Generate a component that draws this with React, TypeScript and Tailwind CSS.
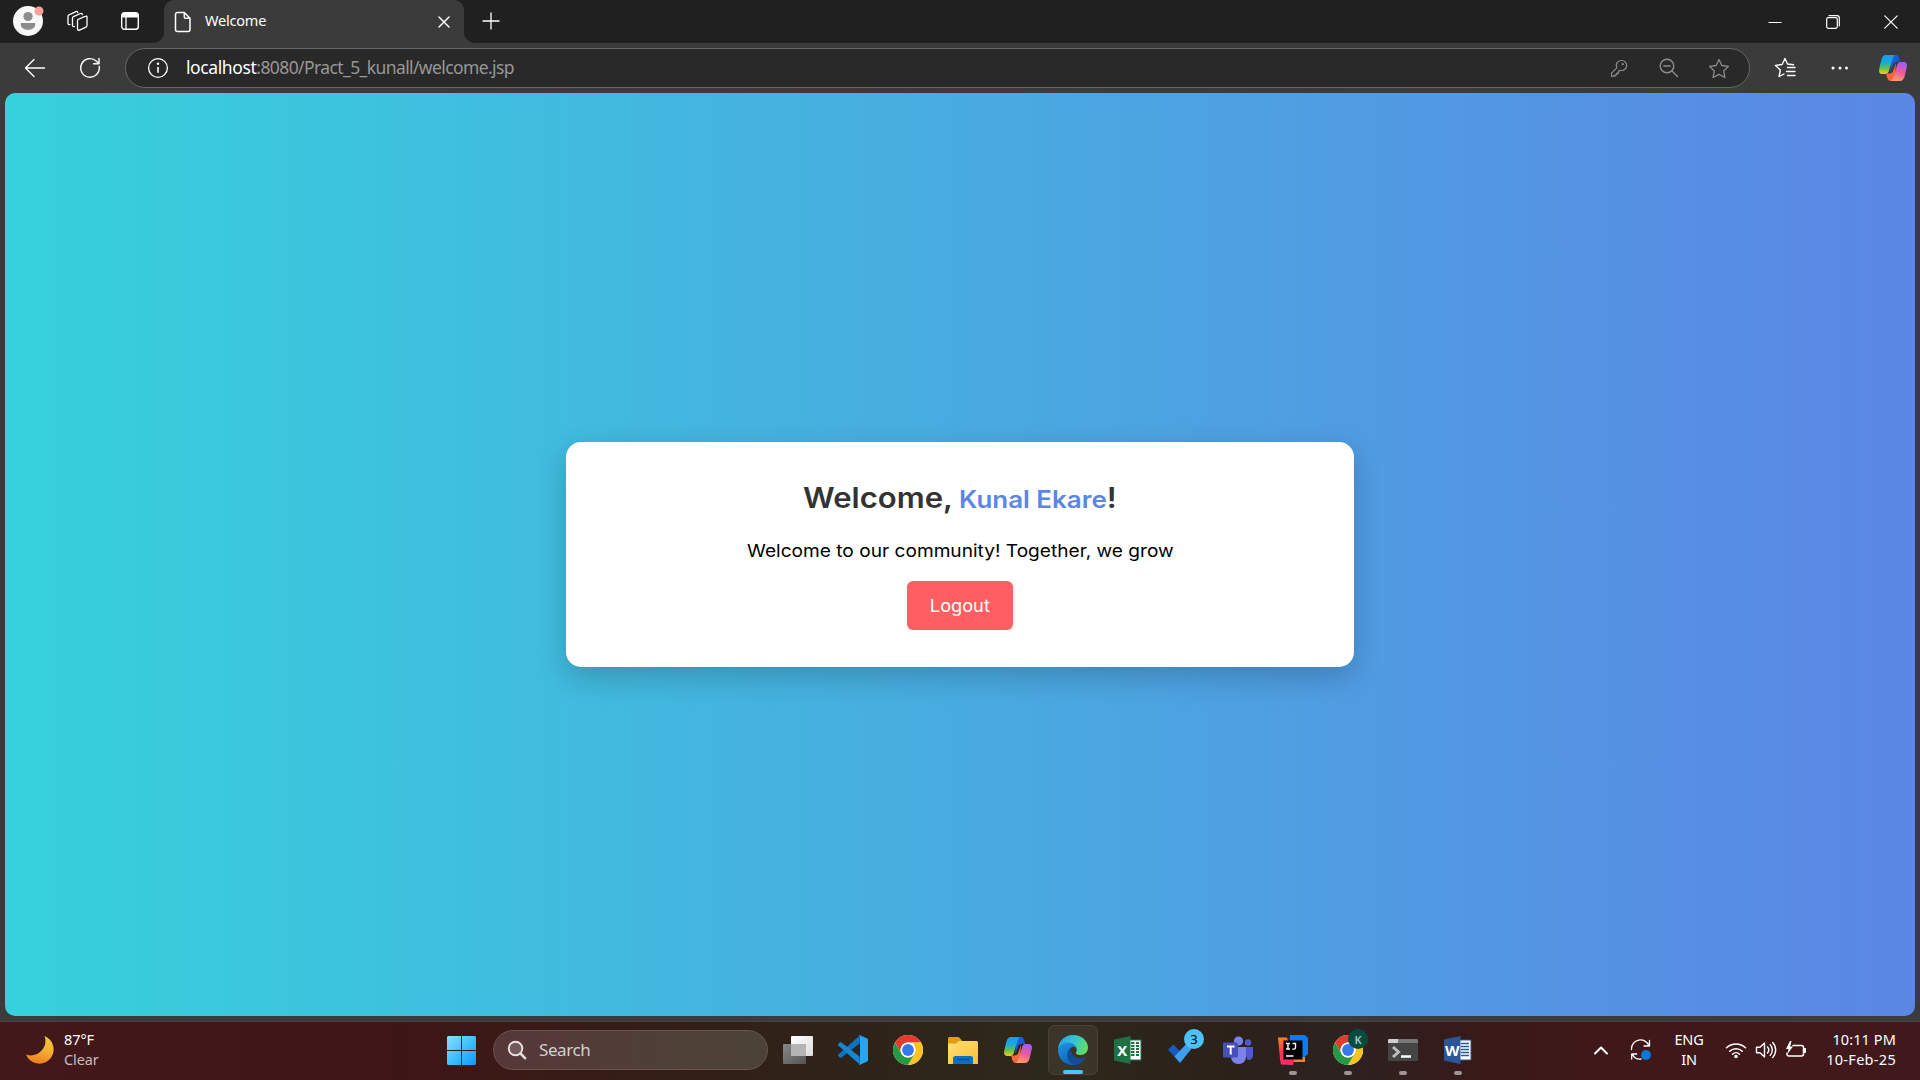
import React from "react";

const line = { fill: "none", stroke: "currentColor", strokeLinecap: "round", strokeLinejoin: "round" } as const;

function Icon({ w, h, box, className = "", children }: { w: number; h: number; box?: string; className?: string; children: React.ReactNode }) {
  return (
    <svg width={w} height={h} viewBox={box ?? `0 0 ${w} ${h}`} className={`block shrink-0 ${className}`} aria-hidden="true">
      {children}
    </svg>
  );
}

function Copilot({ id }: { id: string }) {
  return (
    <Icon w={30} h={28}>
      <defs>
        <linearGradient id={`${id}a`} x1="0" y1="0" x2="0" y2="1">
          <stop offset="0" stopColor="#1b9af0" />
          <stop offset=".4" stopColor="#19a9d8" />
          <stop offset=".7" stopColor="#63c14b" />
          <stop offset="1" stopColor="#f2cc1c" />
        </linearGradient>
        <linearGradient id={`${id}b`} x1=".6" y1="0" x2=".3" y2="1">
          <stop offset="0" stopColor="#a45cf2" />
          <stop offset=".5" stopColor="#ee5a9b" />
          <stop offset="1" stopColor="#ffa25e" />
        </linearGradient>
        <linearGradient id={`${id}c`} x1="0" y1="0" x2="1" y2="1">
          <stop offset="0" stopColor="#1a6fe8" />
          <stop offset="1" stopColor="#1740b8" />
        </linearGradient>
      </defs>
      <path d="M14 1h3.500c2.500 0 3.200 1.500 3.800 3.500l1 3.500h-4c-2 0-3 1-3.600 3L12 19z" fill={`url(#${id}c)`} />
      <path d="M16.500 27H13c-2.500 0-3.200-1.500-3.800-3.500L8 19.500h3.500c2.200 0 3.200-1 3.800-3L18 9z" fill="#f4683e" />
      <path d="M8 1h10c-1.700 0-2.600 1-3.200 3l-4 13c-.6 2-1.800 3-3.500 3H4.500C1.500 20 .5 18 1.300 14.500l2-8.500C4.200 2.500 5.500 1 8 1z" fill={`url(#${id}a)`} />
      <path d="M22 27H12c1.700 0 2.600-1 3.200-3l4-13c.6-2 1.800-3 3.500-3h2.800c3 0 4 2 3.200 5.500l-2 8.500C25.800 25.500 24.500 27 22 27z" fill={`url(#${id}b)`} />
    </Icon>
  );
}

function Chrome() {
  return (
    <>
      <circle cx="15" cy="15" r="15" fill="#fff" />
      <path d="M2 7.500A15 15 0 0 1 28 7.500H15a7.500 7.500 0 0 0-6.500 11.250z" fill="#e33b2e" />
      <path d="M28 7.500A15 15 0 0 1 15 30l6.500-11.250A7.500 7.500 0 0 0 21.500 11.250L20 7.500z" fill="#fcc31e" />
      <path d="M15 30A15 15 0 0 1 2 7.500l6.500 11.250a7.500 7.500 0 0 0 13 0z" fill="#269943" />
      <circle cx="15" cy="15" r="7.400" fill="#fff" />
      <circle cx="15" cy="15" r="5.900" fill="#3478ec" />
    </>
  );
}

function OfficeIcon({ letter, back, front }: { letter: string; back: string; front: string }) {
  return (
    <Icon w={28} h={28}>
      <path d="M14 4h13v20H14z" fill="#fff" stroke={front} strokeWidth="1" />
      {letter === "X" ? (
        <path d="M17 7h3.500M22 7h3M17 10h3.500M22 10h3M17 13h3.500M22 13h3M17 16h3.500M22 16h3M17 19h3.500M22 19h3" stroke={front} strokeWidth="2" />
      ) : (
        <path d="M17 7.500h8M17 10.500h8M17 13.500h8M17 16.500h8M17 19.500h8" stroke={front} strokeWidth="1.500" />
      )}
      <path d="M0 3.500 16.500 0v28L0 24.500z" fill={back} />
      <text x="8.200" y="19.500" textAnchor="middle" fontSize="15" fontWeight="700" fontFamily="Open Sans, sans-serif" fill="#fff">
        {letter}
      </text>
    </Icon>
  );
}

function TaskItem({ active, running, children }: { active?: boolean; running?: boolean; children: React.ReactNode }) {
  return (
    <div className="flex w-[55px] justify-center">
      <div
        className={
          active
            ? "relative flex h-[50px] w-[50px] items-center justify-center rounded-md border border-[#4a4134] bg-[#3b3429]"
            : "relative flex h-[50px] w-[50px] items-center justify-center"
        }
      >
        {children}
        {active && <span className="absolute bottom-0 h-1 w-5 rounded-full bg-[#4cc2ff]" />}
        {running && <span className="absolute bottom-0 h-1 w-2 rounded-full bg-[#9b9694]" />}
      </div>
    </div>
  );
}

function TabStrip() {
  return (
    <div className="flex h-[43px] bg-[#202020] text-white">
      <div className="flex w-[164px] items-start">
        <Icon w={34} h={36} className="ml-3 mt-1">
          <circle cx="16" cy="17" r="15" fill="#f7f7f7" />
          <circle cx="16" cy="12.500" r="4.600" fill="#8c8c8c" />
          <path d="M8.800 19h14.400v1.500c0 3.200-3 5.300-7.200 5.300s-7.200-2.100-7.200-5.300z" fill="#8c8c8c" />
          <circle cx="27" cy="7" r="4.500" fill="#fca198" />
        </Icon>
        <Icon w={24} h={24} className="ml-5 mt-[9px]">
          <g {...line} strokeWidth="1.300" transform="translate(-1.500 -1)">
            <path d="m13.500 11.500 7.500-3.300c.8-.4 1.500 0 1.500.9v8.400c0 .8-.3 1.300-1 1.600l-6.500 3c-1 .5-2 0-2-1v-8.200c0-.7 0-1 .5-1.400z" />
            <path d="M10 18.500c-1 .4-2 0-2-1v-7.300c0-.8.300-1.200 1-1.500l7-3.200c1-.4 1.600 0 1.800 1" />
            <path d="M5.500 16.500c-1 .4-2 0-2-1V8.300c0-.8.300-1.200 1-1.500l7-3.200c1-.4 1.600 0 1.800 1" />
          </g>
        </Icon>
        <Icon w={20} h={20} className="ml-[30px] mt-[11px]">
          <rect x="1.700" y="1.700" width="16.600" height="16.600" rx="2.800" {...line} strokeWidth="1.400" />
          <path d="M1.500 6.500V4A2.700 2.700 0 0 1 4 1.500h12A2.700 2.700 0 0 1 18.500 4v2.500z" fill="#fff" />
          <path d="M6 6v12" stroke="#fff" strokeWidth="1.300" />
        </Icon>
      </div>
      <div className="relative flex w-[300px] items-center rounded-t-[10px] bg-[#3b3b3b]">
        <span className="absolute -left-[10px] bottom-0 h-[10px] w-[10px] bg-[radial-gradient(circle_at_0_0,#202020_9.500px,#3b3b3b_10px)]" />
        <span className="absolute -right-[10px] bottom-0 h-[10px] w-[10px] bg-[radial-gradient(circle_at_100%_0,#202020_9.500px,#3b3b3b_10px)]" />
        <Icon w={18} h={22} className="ml-[10px]">
          <path d="M3.500 1.500h6.800L16 7.200v11.300a2 2 0 0 1-2 2H3.500a2 2 0 0 1-2-2v-15a2 2 0 0 1 2-2zM10.300 1.700V6a1.200 1.200 0 0 0 1.200 1.200H16" {...line} strokeWidth="1.500" />
        </Icon>
        <span className="-mt-0.5 ml-[13px] flex-1 text-[14.500px] tracking-[-0.2px]">Welcome</span>
        <Icon w={12} h={12} className="mr-[14px]">
          <path d="M1 1l10 10M11 1 1 11" {...line} strokeWidth="1.500" />
        </Icon>
      </div>
      <Icon w={18} h={18} className="ml-[17.500px] mt-3">
        <path d="M.5 9h17M9 .5v17" stroke="#fff" strokeWidth="1.300" />
      </Icon>
      <div className="ml-auto mr-[22px] flex items-center gap-[43px]">
        <Icon w={14} h={14}>
          <path d="M.5 7.500h13" stroke="#fff" />
        </Icon>
        <Icon w={14} h={14} className="ml-px">
          <rect x=".7" y="2.700" width="10.600" height="10.600" rx="1.500" {...line} strokeWidth="1.200" />
          <path d="M3 .7h8a2.300 2.300 0 0 1 2.300 2.300v8" {...line} strokeWidth="1.200" />
        </Icon>
        <Icon w={14} h={14} className="ml-px">
          <path d="M.8.8l12.400 12.400M13.200.8.8 13.200" {...line} strokeWidth="1.200" />
        </Icon>
      </div>
    </div>
  );
}

const star = "M11 1.500l2.900 6 6.600.9-4.800 4.600 1.200 6.500L11 16.400l-5.900 3.100 1.200-6.500L1.500 8.400l6.600-.9z";

function Toolbar() {
  return (
    <div className="flex h-[50px] items-center bg-[#3b3b3b] text-white">
      <Icon w={22} h={20} className="ml-6">
        <path d="M20.500 10H1.500M10 1.500 1.500 10l8.500 8.500" {...line} strokeWidth="1.400" />
      </Icon>
      <Icon w={22} h={22} className="ml-[33px]">
        <path d="M20.200 9.500A9.300 9.300 0 1 1 17.500 4.300L20 6.700M20 1.500v5.300h-5.400" {...line} strokeWidth="1.400" />
      </Icon>
      <div className="ml-6 flex h-10 w-[1625px] items-center rounded-full border border-[#666] bg-[#292929]">
        <Icon w={22} h={22} className="ml-[21px]">
          <circle cx="11" cy="11" r="9.400" {...line} strokeWidth="1.300" />
          <path d="M11 10v5.800" stroke="#fff" strokeWidth="1.600" />
          <circle cx="11" cy="6.800" r="1.200" fill="#fff" />
        </Icon>
        <div className="-mt-px ml-[17px] flex-1 whitespace-nowrap text-[17.500px] tracking-[-0.600px] text-[#979797]">
          <span className="tracking-[-0.400px] text-white">localhost</span>:8080/Pract_5_kunall/welcome.jsp
        </div>
        <div className="flex items-center text-[#8d8d8d]">
          <Icon w={18} h={18}>
            <path d="M11.300 1.500a5 5 0 1 1-1.300 9.700l-1.500 1.300v1.700H6.700v1.600H5v1.400H1.500v-3l5.300-5.300a5 5 0 0 1 4.500-7.400z" {...line} strokeWidth="1.200" />
            <circle cx="12.800" cy="5.200" r="1.100" fill="currentColor" />
          </Icon>
          <Icon w={20} h={20} className="ml-[31px]">
            <circle cx="8" cy="8" r="6.800" {...line} strokeWidth="1.400" />
            <path d="M4.800 8h6.400M13 13l5.500 5.500" {...line} strokeWidth="1.400" />
          </Icon>
          <Icon w={22} h={21} className="ml-[29px] mr-[19px]">
            <path d={star} {...line} strokeWidth="1.300" />
          </Icon>
        </div>
      </div>
      <Icon w={22} h={22} className="ml-[24px]">
        <path d="M19.500 7.800 13.500 7 11 1.500 8.100 7.500l-6.600.9 4.800 4.600-1.200 6.500L10 17M13.500 10.500h7.500M12.500 14.500H21M13.500 18.500H21" {...line} strokeWidth="1.400" />
      </Icon>
      <Icon w={18} h={4} className="ml-[35px]">
        <circle cx="2" cy="2" r="1.500" fill="#fff" />
        <circle cx="9" cy="2" r="1.500" fill="#fff" />
        <circle cx="15.500" cy="2" r="1.500" fill="#fff" />
      </Icon>
      <div className="ml-[29px]">
        <Copilot id="top" />
      </div>
    </div>
  );
}

function WelcomeCard() {
  return (
    <div className="flex h-[225px] w-[788px] flex-col items-center rounded-[15px] bg-white pt-[33px] font-['Inter',sans-serif] shadow-[0_10px_30px_rgba(0,0,0,0.2)]">
      <h1 className="scale-x-[1.09] whitespace-nowrap text-[28.500px] font-semibold leading-[46px] text-[#333]">
        Welcome, <span className="-ml-px text-[23.800px] text-[#5b86e5]">Kunal Ekare</span>!
      </h1>
      <p className="mt-[15px] scale-x-[1.092] whitespace-nowrap text-[17.500px] leading-[26px] text-black">Welcome to our community! Together, we grow</p>
      <button className="mt-[17px] h-[49px] w-[106px] rounded-md bg-[#ff5e62] pt-px text-[17.500px] text-white">
        <span className="inline-block scale-x-[1.04]">Logout</span>
      </button>
    </div>
  );
}

function Taskbar() {
  return (
    <div className="flex h-[59px] items-center border-t border-[#4d3f3f] bg-[linear-gradient(to_right,#43181b_0%,#3f1517_20%,#351d17_32%,#2f2219_42%,#2d281c_55%,#2c2119_64%,#2c2220_70%,#3a1918_78%,#401819_84%,#41191c_100%)] pb-[2px] text-white">
      <div className="flex w-[447px] items-center">
        <Icon w={30} h={30} className="ml-[25px]">
          <defs>
            <linearGradient id="moon" x1=".6" y1="0" x2=".4" y2="1">
              <stop offset="0" stopColor="#f6c63b" />
              <stop offset=".5" stopColor="#f4ae35" />
              <stop offset="1" stopColor="#ef7d1f" />
            </linearGradient>
          </defs>
          <path d="M19.500 1A14.300 14.300 0 1 1 1 19.500 14.500 14.500 0 0 0 19.500 1z" fill="url(#moon)" />
        </Icon>
        <div className="-mt-[2px] ml-[9px] text-[14.500px] leading-[20px] tracking-[-0.1px]">
          <div>87°F</div>
          <div className="text-[#c8bcbd]">Clear</div>
        </div>
      </div>
      <Icon w={29} h={29}>
        <defs>
          <linearGradient id="win" gradientUnits="userSpaceOnUse" x1="0" y1="0" x2="29" y2="29">
            <stop offset="0" stopColor="#8be0ff" />
            <stop offset=".5" stopColor="#3fc1fc" />
            <stop offset="1" stopColor="#0d98fb" />
          </linearGradient>
        </defs>
        <path d="M1 0h13v14H0V1zM15 0h13l1 1v13H15zM0 15h14v14H1l-1-1zM15 15h14v13l-1 1H15z" fill="url(#win)" />
      </Icon>
      <div className="ml-[17px] flex h-10 w-[275px] items-center rounded-full border border-[#675450] bg-[linear-gradient(to_right,#573738,#4f3f38_60%,#4c4235)]">
        <Icon w={20} h={20} className="ml-[13px]">
          <circle cx="8.500" cy="8.500" r="6.800" fill="#73595a" stroke="#e8e4e4" strokeWidth="1.900" />
          <path d="m13.500 13.500 4.500 4.700" stroke="#e0dcdc" strokeWidth="2.600" strokeLinecap="round" />
        </Icon>
        <span className="ml-[12px] text-[17px] tracking-[-0.4px] text-[#d5cfce]">Search</span>
      </div>
      <div className="ml-[2.500px] flex">
        <TaskItem>
          <Icon w={30} h={28}>
            <defs>
              <linearGradient id="tv" x1="0" y1="0" x2="1" y2="1">
                <stop offset="0" stopColor="#fff" />
                <stop offset="1" stopColor="#dcdcdc" />
              </linearGradient>
              <linearGradient id="tv2" x1="0" y1="0" x2="1" y2="1">
                <stop offset="0" stopColor="#888" />
                <stop offset="1" stopColor="#555" />
              </linearGradient>
            </defs>
            <rect x="0" y="8" width="23" height="20" rx="1" fill="url(#tv2)" />
            <rect x="8" y="0" width="22" height="20" rx="1" fill="url(#tv)" />
            <path d="M8 8h15v12H8z" fill="#b4b4b4" />
          </Icon>
        </TaskItem>
        <TaskItem>
          <Icon w={30} h={30}>
            <path d="M21.500 8.500 3.500 22.500c-.6.500-1.200.4-1.700 0l-1.500-1.400c-.5-.5-.5-1.200 0-1.700L22 .300z" fill="#0f74c0" />
            <path d="M21.500 21.500 3.500 7.500c-.6-.5-1.200-.4-1.700 0L.300 8.900c-.5.500-.5 1.200 0 1.700L22 29.700z" fill="#1585d4" />
            <path d="M22 .200 28.600 3.200c.9.400 1.400 1 1.400 2v19.600c0 1-.5 1.600-1.400 2L22 29.800c-.5.300-1.300 0-1.700-.5.700.6 1.700.1 1.700-.8V1.500c0-.9-1-1.400-1.700-.8.400-.5 1.200-.8 1.700-.5z" fill="#27a5f2" />
          </Icon>
        </TaskItem>
        <TaskItem>
          <Icon w={30} h={30}>
            <Chrome />
          </Icon>
        </TaskItem>
        <TaskItem>
          <Icon w={30} h={27}>
            <defs>
              <linearGradient id="fold" x1="0" y1="0" x2="1" y2="1">
                <stop offset="0" stopColor="#ffdf78" />
                <stop offset="1" stopColor="#fbbf33" />
              </linearGradient>
            </defs>
            <path d="M0 1.500C0 .7.700 0 1.500 0h8.200c.7 0 1.300.3 1.800.8L14 3.500V9H0z" fill="#e29e10" />
            <path d="M11 4h17.500c.8 0 1.500.7 1.500 1.500V27H0V6.500h8z" fill="url(#fold)" />
            <path d="M5 21.500a2.500 2.500 0 0 1 2.500-2.500h15a2.500 2.500 0 0 1 2.500 2.500V27H5z" fill="#0b70c4" />
            <path d="M9 22.500h12" stroke="#0a4c8c" strokeWidth="1.400" />
          </Icon>
        </TaskItem>
        <TaskItem>
          <Copilot id="bar" />
        </TaskItem>
        <TaskItem active>
          <Icon w={30} h={30}>
            <defs>
              <linearGradient id="eg" x1="0" y1=".2" x2="1" y2=".5">
                <stop offset="0" stopColor="#2a9fe6" />
                <stop offset=".5" stopColor="#33c4d6" />
                <stop offset="1" stopColor="#62df5c" />
              </linearGradient>
              <linearGradient id="eb" x1="0" y1="0" x2=".6" y2="1">
                <stop offset="0" stopColor="#2095e3" />
                <stop offset="1" stopColor="#0d5fb8" />
              </linearGradient>
            </defs>
            <path d="M0 15C0 6.500 6.500 0 15 0c8.800 0 15 6 15 12.500 0 4.500-3.200 7.500-7.500 7.500-3.200 0-5.200-1.200-4.500-2.500 1.500-2 1.200-7.500-5-8.500C6.500 8 1.500 11 0 15z" fill="url(#eg)" />
            <path d="M0 15c.8-5 5.500-8 10.500-7.500 4 .3 7 2.500 8 6-1-1.500-3-2-4.500-1.500-3 1.500-4.500 9 4 12.500 3 1 6 .5 8.500-1C24 28 19.500 30 15 30 6.500 30 0 23.500 0 15z" fill="url(#eb)" />
            <path d="M12.500 13C7.500 17 8 27 16 30c5-.3 9-3 11.300-7 .3-.6-.3-.9-.8-.6-6.500 3-14-.9-14-9.400z" fill="#124d95" />
          </Icon>
        </TaskItem>
        <TaskItem>
          <OfficeIcon letter="X" back="#1e7145" front="#207245" />
        </TaskItem>
        <TaskItem>
          <div className="relative mt-1">
            <Icon w={30} h={22}>
              <path d="m0 8.500 5.500-5L15.500 14l-4.300 7z" fill="#195abe" />
              <path d="M6.500 15.500 21 0l5.500 4L12 22z" fill="#3c9ff0" />
            </Icon>
            <span className="absolute -top-[12px] left-[16px] flex h-5 w-5 items-center justify-center rounded-full bg-[#4cc2ff] text-[13px] leading-none text-black">3</span>
          </div>
        </TaskItem>
        <TaskItem>
          <Icon w={30} h={28}>
            <circle cx="25" cy="6.500" r="3.200" fill="#5059c9" />
            <path d="M20 11h10v8.500c0 3-2.500 5-5.500 4.500z" fill="#5059c9" />
            <circle cx="15.500" cy="5" r="4.600" fill="#7b83eb" />
            <path d="M8 11h15v9.500c0 4.500-3 7.500-7.500 7.500S8 25 8 20.500z" fill="#7b83eb" />
            <rect x="0" y="6.500" width="15" height="15" rx="1.500" fill="#4650bd" />
            <path d="M4 10.500h7.500M7.700 10.500v8" stroke="#fff" strokeWidth="2" />
          </Icon>
        </TaskItem>
        <TaskItem running>
          <Icon w={30} h={30}>
            <defs>
              <linearGradient id="ij" x1="0" y1="0" x2=".3" y2="1">
                <stop offset="0" stopColor="#ff8a1f" />
                <stop offset=".5" stopColor="#ff3a4c" />
                <stop offset="1" stopColor="#ff2a6b" />
              </linearGradient>
            </defs>
            <path d="M12 0h15l3 3v16l-6 5H10z" fill="#087cfa" />
            <path d="M17 22h10v5H15z" fill="#fc801d" />
            <path d="M0 2.500h9L16 24l-1 6-12-.6L2 24z" fill="url(#ij)" />
            <rect x="5.500" y="5.500" width="19" height="19" fill="#000" />
            <path d="M8 8.500h4M10 8.500v5.500M8 14h4M14.500 8.500h3v4c0 1-.6 1.600-1.700 1.600h-1.500M8 21h7.500" stroke="#fff" strokeWidth="1.400" fill="none" />
          </Icon>
        </TaskItem>
        <TaskItem running>
          <div className="relative">
            <Icon w={30} h={30}>
              <Chrome />
            </Icon>
            <span className="absolute -top-[6px] left-[15px] flex h-5 w-5 items-center justify-center rounded-full bg-[#064b3f] text-[11px] font-semibold leading-none text-[#a9c6c1]">K</span>
          </div>
        </TaskItem>
        <TaskItem running>
          <Icon w={30} h={22}>
            <rect width="30" height="22" rx="1" fill="#454545" />
            <path d="M0 4V1l1-1h28l1 1v3z" fill="#777" />
            <path d="M1 0h9v4H0V1z" fill="#cfcfcf" />
            <path d="m5 8 5.500 5L5 18" stroke="#bdbdbd" strokeWidth="3" fill="none" />
            <path d="M13 17.500h10" stroke="#fff" strokeWidth="2.500" />
          </Icon>
        </TaskItem>
        <TaskItem running>
          <OfficeIcon letter="W" back="#2a5699" front="#2a5699" />
        </TaskItem>
      </div>
      <div className="ml-auto mr-6 flex items-center">
        <Icon w={16} h={10}>
          <path d="m2 8.500 6-6 6 6" {...line} strokeWidth="2" />
        </Icon>
        <Icon w={22} h={22} className="ml-[21px]">
          <path d="M1.500 10.500A9 9 0 0 1 19 7M19.500 1.500V7H14M1.700 20v-5h5M2.500 15.500c1.500 3 5 5 8.500 4.500" {...line} strokeWidth="1.300" />
          <circle cx="16" cy="16" r="5" fill="#0a78d7" />
        </Icon>
        <div className="-mt-[2px] ml-[22px] w-[30px] text-center text-[14.500px] leading-[20px] tracking-[-0.2px]">
          ENG
          <br />
          IN
        </div>
        <Icon w={22} h={18} className="ml-[21px]">
          <path d="M1.500 6.800a13.500 13.500 0 0 1 19 0M4.700 10.200a9 9 0 0 1 12.600 0M7.500 13.200a5 5 0 0 1 7 0" {...line} strokeWidth="1.500" />
          <circle cx="11" cy="15.500" r="1.800" fill="#fff" />
        </Icon>
        <Icon w={22} h={18} className="ml-[8px]">
          <path d="M1.500 6.200h3.500L9.500 2v14L5 11.800H1.500zM12.500 6a4.500 4.500 0 0 1 0 6M15.200 3.800a7.500 7.500 0 0 1 0 10.400M17.700 1.500a11 11 0 0 1 0 15" {...line} strokeWidth="1.400" />
        </Icon>
        <Icon w={22} h={18} className="ml-[8px]">
          <path d="M8 4.500h8.500a2 2 0 0 1 2 2v6.500a2 2 0 0 1-2 2H4a2 2 0 0 1-2-2v-1" {...line} strokeWidth="1.500" />
          <path d="M19 7.500h1.500v4H19z" fill="#fff" stroke="#fff" />
          <path d="M5 0 1 8h2.500L2.500 13 8 5.500H5.200L6.500 0z" fill="#fff" />
        </Icon>
        <div className="-mt-[2px] ml-[15px] w-[74px] whitespace-nowrap text-right text-[14.500px] leading-[20px]">
          <div className="tracking-[0.100px]">10:11 PM</div>
          <div className="tracking-[0.300px]">10-Feb-25</div>
        </div>
      </div>
    </div>
  );
}

export default function App() {
  return (
    <div className="flex h-[1080px] w-[1920px] flex-col overflow-hidden bg-[#3b3b3b] font-['Noto_Sans',sans-serif]">
      <TabStrip />
      <Toolbar />
      <main className="mx-[5px] mb-[5px] flex flex-1 items-center justify-center rounded-[10px] bg-[linear-gradient(to_right,#36d1dc,#5b86e5)]">
        <WelcomeCard />
      </main>
      <Taskbar />
    </div>
  );
}
